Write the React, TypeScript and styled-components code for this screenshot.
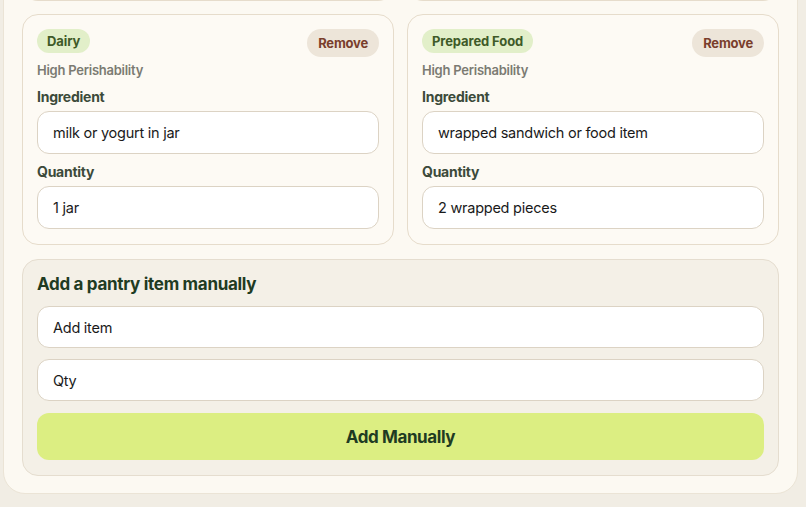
import React from 'react';
import styled, { createGlobalStyle } from 'styled-components';

const GlobalStyle = createGlobalStyle`
    html, body {
        margin: 0;
        padding: 0;
        background: #f1ede4;
        font-family: Inter, "Noto Sans", "Liberation Sans", sans-serif;
        -webkit-font-smoothing: antialiased;
    }
    * {
        box-sizing: border-box;
    }
`;

const Page = styled.div`
    height: 507px;
    overflow: hidden;
    padding: 0 8px 0 3px;
`;

// the panel carries on above the window, so it is pulled up
const Panel = styled.div`
    margin-top: -40px;
    padding: 18px 18px 17px;
    background: #fcf9f2;
    border: 1px solid #ebe4d6;
    border-radius: 22px;
    display: flex;
    flex-direction: column;
    gap: 14px;
`;

const CardList = styled.div<{ $tail?: boolean }>`
    display: grid;
    grid-template-columns: 1fr 1fr;
    gap: 13px;
    margin-bottom: ${({ $tail }) => ($tail ? '-1px' : '0')};
`;

const Card = styled.div`
    background: #fdfaf4;
    border: 1px solid #e6dccb;
    border-radius: 16px;
    padding: 14px 14px 15px;
    display: flex;
    flex-direction: column;
`;

// bottom edge of the cards in the row scrolled above the window
const CardTail = styled.div`
    height: 22px;
    background: #fdfaf4;
    border: 1px solid #e6dccb;
    border-top: none;
    border-radius: 0 0 16px 16px;
`;

const CardHeader = styled.div`
    display: flex;
    justify-content: space-between;
    align-items: flex-start;
`;

const Badge = styled.span`
    height: 24px;
    padding: 0 10px;
    display: inline-flex;
    align-items: center;
    border-radius: 999px;
    background: #e2efc9;
    color: #3f5a28;
    font-size: 13px;
    font-weight: 700;
    letter-spacing: -0.1px;
`;

const RemoveButton = styled.button`
    height: 28px;
    padding: 0 11px;
    border: none;
    border-radius: 999px;
    background: #ede5d9;
    color: #7a3e2c;
    font-family: inherit;
    font-size: 13px;
    font-weight: 700;
    letter-spacing: -0.2px;
    cursor: pointer;
`;

const Perishability = styled.div`
    margin-top: 4px;
    font-size: 13px;
    line-height: 18px;
    font-weight: 600;
    letter-spacing: -0.25px;
    color: #7b7a72;
`;

const FieldLabel = styled.label`
    margin: 8px 0 4px;
    font-size: 14px;
    line-height: 20px;
    font-weight: 700;
    letter-spacing: -0.25px;
    color: #3c4a3a;
`;

const TextInput = styled.input<{ $height?: number }>`
    width: 100%;
    height: ${({ $height }) => $height ?? 43}px;
    padding: 0 15px;
    background: #ffffff;
    border: 1px solid #dcd3c4;
    border-radius: 12px;
    font-family: inherit;
    font-size: 14.5px;
    letter-spacing: -0.25px;
    color: #1a1a1a;
    outline: none;

    &::placeholder {
        color: #1a1a1a;
    }
`;

const ManualBox = styled.div`
    background: #f4f0e7;
    border: 1px solid #e5ddcf;
    border-radius: 16px;
    padding: 14px 14px 15px;
    display: flex;
    flex-direction: column;
    gap: 11px;
`;

const ManualTitle = styled.h3`
    margin: 0;
    font-size: 17px;
    line-height: 21px;
    font-weight: 700;
    letter-spacing: -0.3px;
    color: #1f3b22;
`;

const AddButton = styled.button`
    margin-top: 1px;
    height: 47px;
    border: none;
    border-radius: 12px;
    background: #dcee82;
    color: #1f3b22;
    font-family: inherit;
    font-size: 17px;
    font-weight: 700;
    letter-spacing: -0.4px;
    cursor: pointer;
`;

type PantryItem = {
    category: string;
    perishability: string;
    ingredient: string;
    quantity: string;
};

const items: PantryItem[] = [
    { category: 'Dairy', perishability: 'High Perishability', ingredient: 'milk or yogurt in jar', quantity: '1 jar' },
    { category: 'Prepared Food', perishability: 'High Perishability', ingredient: 'wrapped sandwich or food item', quantity: '2 wrapped pieces' },
];

const ItemCard = ({ item }: { item: PantryItem }) => (
    <Card>
        <CardHeader>
            <Badge>{item.category}</Badge>
            <RemoveButton>Remove</RemoveButton>
        </CardHeader>
        <Perishability>{item.perishability}</Perishability>
        <FieldLabel>Ingredient</FieldLabel>
        <TextInput defaultValue={item.ingredient} />
        <FieldLabel>Quantity</FieldLabel>
        <TextInput defaultValue={item.quantity} />
    </Card>
);

export default function App() {
    return (
        <>
            <GlobalStyle />
            <Page>
                <Panel>
                    <CardList $tail>
                        <CardTail />
                        <CardTail />
                    </CardList>
                    <CardList>
                        {items.map((item) => (
                            <ItemCard key={item.ingredient} item={item} />
                        ))}
                    </CardList>
                    <ManualBox>
                        <ManualTitle>Add a pantry item manually</ManualTitle>
                        <TextInput $height={42} placeholder="Add item" />
                        <TextInput $height={42} placeholder="Qty" />
                        <AddButton>Add Manually</AddButton>
                    </ManualBox>
                </Panel>
            </Page>
        </>
    );
}
